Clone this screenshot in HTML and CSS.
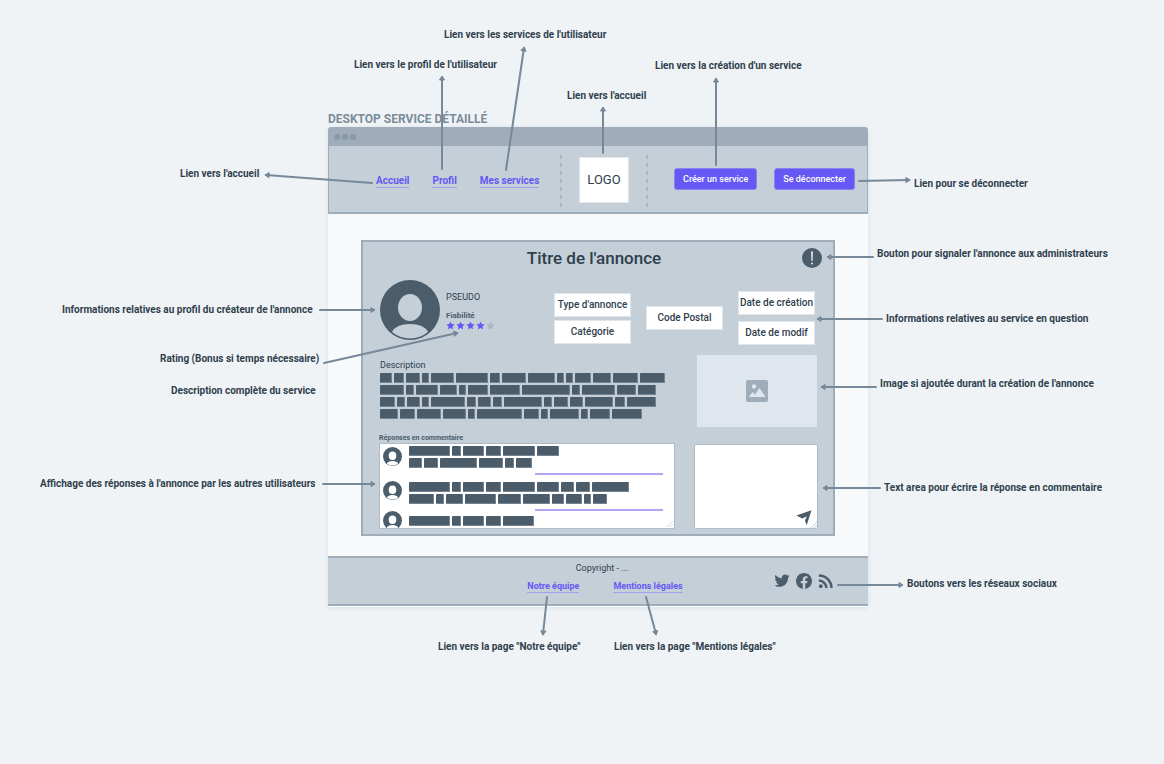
FILE: index.html
```html
<!DOCTYPE html>
<html lang="fr">
<head>
<meta charset="utf-8">
<meta name="viewport" content="width=device-width, initial-scale=1">
<title>Desktop service détaillé</title>
<link rel="stylesheet" href="styles.css">
<script src="words.js" defer></script>
</head>
<body>
<svg class="defs" aria-hidden="true">
  <symbol id="user" viewBox="0 0 60 60">
    <circle cx="30" cy="30" r="30" fill="#4b5d6b"/>
    <ellipse cx="30" cy="27.500" rx="12" ry="13.500" fill="currentColor"/>
    <path d="M12 52Q16 44 30 44Q44 44 48 52A28.500 28.500 0 0 1 12 52Z" fill="currentColor"/>
  </symbol>
  <symbol id="star" viewBox="0 0 24 24">
    <path d="M12 1l3.300 7.200 7.700.9-5.700 5.300 1.500 7.800L12 18.400l-6.800 3.800 1.500-7.800L1 9.100l7.700-.9z" fill="currentColor"/>
  </symbol>
</svg>
<main class="canvas">
  <section class="artboard">
    <h1 class="artboard-name">DESKTOP SERVICE DÉTAILLÉ</h1>
    <div class="window">
      <div class="titlebar"><i></i><i></i><i></i></div>
      <header class="site-header">
        <nav class="links">
          <a href="#">Accueil</a>
          <a href="#">Profil</a>
          <a href="#">Mes services</a>
        </nav>
        <div class="brand"><a class="logo" href="#">LOGO</a></div>
        <div class="actions">
          <button type="button">Créer un service</button>
          <button type="button">Se déconnecter</button>
        </div>
      </header>

      <div class="page">
        <article class="panel">
          <div class="panel-head">
            <h2>Titre de l'annonce</h2>
            <button class="report" type="button" aria-label="Signaler l'annonce">
              <svg viewBox="0 0 20 20"><circle cx="10" cy="10" r="10" fill="#4b5d6b"/><path d="M9 3.500h2l-.4 9.500h-1.200z" fill="#dfe6ed"/><circle cx="10" cy="15.500" r="1" fill="#dfe6ed"/></svg>
            </button>
          </div>

          <div class="meta">
            <svg class="avatar"><use href="#user"/></svg>
            <div class="author">
              <p class="pseudo">PSEUDO</p>
              <p class="caption">Fiabilité</p>
              <div class="stars">
                <svg><use href="#star"/></svg><svg><use href="#star"/></svg><svg><use href="#star"/></svg><svg><use href="#star"/></svg><svg class="off"><use href="#star"/></svg>
              </div>
            </div>
            <div class="chips"><span>Type d'annonce</span><span>Catégorie</span></div>
            <div class="chips"><span>Code Postal</span></div>
            <div class="chips dates"><span>Date de création</span><span>Date de modif</span></div>
          </div>

          <div class="row">
            <section class="description">
              <h3>Description</h3>
              <div class="text">
                <div class="words" data-words="12 10 14 7 23 32 10 24 27 7 7 16 18 25 25"></div>
                <div class="words" data-words="24 8 22 17 7 20 30 48 8 33 19 18"></div>
                <div class="words" data-words="15 8 13 7 34 9 13 9 38 8 14 13 28 10 29"></div>
                <div class="words" data-words="18 15 24 23 7 45 15 7 29 7 20 30"></div>
              </div>
            </section>
            <div class="picture">
              <svg viewBox="0 0 22 22"><rect width="22" height="22" rx="2" fill="#9eadb9"/><circle cx="8" cy="6.500" r="2.200" fill="#dfe6ed"/><path d="M3 17l3.500-5 2.500 2.500 4.500-6.500 6 9z" fill="#dfe6ed"/></svg>
            </div>
          </div>

          <div class="row replies">
            <section class="thread-wrap">
              <h3 class="caption">Réponses en commentaire</h3>
              <div class="thread">
                <div class="comment first">
                  <svg><use href="#user"/></svg>
                  <div class="text">
                    <div class="words" data-words="41 9 21 15 32 22"></div>
                    <div class="words" data-words="13 14 37 24 9 16"></div>
                  </div>
                </div>
                <hr>
                <div class="comment next">
                  <svg><use href="#user"/></svg>
                  <div class="text">
                    <div class="words" data-words="41 9 21 15 32 22 13 14 37"></div>
                    <div class="words" data-words="25 8 17 31 23 27 12 16 7 14"></div>
                  </div>
                </div>
                <hr>
                <div class="comment last">
                  <svg><use href="#user"/></svg>
                  <div class="text">
                    <div class="words" data-words="41 9 21 15 31"></div>
                  </div>
                </div>
                <svg class="grip" viewBox="0 0 6 6"><path d="M0 6L6 0M3 6L6 3" stroke="#d5dce3"/></svg>
              </div>
            </section>
            <div class="reply">
              <textarea aria-label="Réponse en commentaire"></textarea>
              <svg class="grip" viewBox="0 0 6 6"><path d="M0 6L6 0M3 6L6 3" stroke="#c4cfd8"/></svg>
              <button class="send" type="button" aria-label="Envoyer">
                <svg viewBox="0 0 16 16"><path d="M.3 5.500L15.500.3 10.700 15.200 8.900 10.500 10.800 6.200 6.300 8.600z" fill="#4b5d6b"/></svg>
              </button>
            </div>
          </div>
        </article>
      </div>

      <footer class="site-footer">
        <div class="legal">
          <p>Copyright - ...</p>
          <div class="legal-links"><a href="#">Notre équipe</a><a href="#">Mentions légales</a></div>
        </div>
        <div class="social">
          <a href="#" aria-label="Twitter"><svg viewBox="1 2 22 22"><path d="M22.460 6C21.690 6.350 20.860 6.580 20 6.690C20.880 6.160 21.560 5.320 21.880 4.310C21.050 4.810 20.130 5.160 19.160 5.360C18.370 4.500 17.260 4 16 4C13.650 4 11.730 5.920 11.730 8.290C11.730 8.630 11.770 8.960 11.840 9.270C8.280 9.090 5.110 7.380 3 4.790C2.630 5.420 2.420 6.160 2.420 6.940C2.420 8.430 3.170 9.750 4.330 10.500C3.620 10.500 2.960 10.300 2.380 10C2.380 12.110 3.860 13.850 5.820 14.240C5.460 14.340 5.080 14.390 4.690 14.390C4.420 14.390 4.150 14.360 3.890 14.310C4.430 16 6 17.260 7.890 17.290C6.430 18.450 4.580 19.130 2.560 19.130C2.220 19.130 1.880 19.110 1.540 19.070C3.440 20.290 5.700 21 8.120 21C16 21 20.330 14.460 20.330 8.790C20.330 8.600 20.330 8.420 20.320 8.230C21.160 7.630 21.880 6.870 22.460 6Z"/></svg></a>
          <a href="#" aria-label="Facebook"><svg viewBox="2 2 20 20"><path d="M12 2.040C6.500 2.040 2 6.530 2 12.060C2 17.060 5.660 21.210 10.440 21.960V14.960H7.900V12.060H10.440V9.850C10.440 7.340 11.930 5.960 14.220 5.960C15.310 5.960 16.450 6.150 16.450 6.150V8.620H15.190C13.950 8.620 13.560 9.390 13.560 10.180V12.060H16.340L15.890 14.960H13.560V21.960A10 10 0 0 0 22 12.060C22 6.530 17.500 2.040 12 2.040Z"/></svg></a>
          <a href="#" aria-label="RSS"><svg viewBox="3 3 18 18"><path d="M6.180 15.640A2.180 2.180 0 0 1 8.360 17.820C8.360 19 7.380 20 6.180 20C5 20 4 19 4 17.820A2.180 2.180 0 0 1 6.180 15.640M4 4.440A15.560 15.560 0 0 1 19.560 20H16.730A12.730 12.730 0 0 0 4 7.270V4.440M4 10.100A9.900 9.900 0 0 1 13.900 20H11.070A7.070 7.070 0 0 0 4 12.930V10.100Z"/></svg></a>
        </div>
      </footer>
    </div>
  </section>

  <svg class="arrows" width="1164" height="764" aria-hidden="true">
    <defs>
      <marker id="head" markerUnits="userSpaceOnUse" markerWidth="8" markerHeight="8" refX="5" refY="4" orient="auto"><path d="M2 1.500L6 4L2 6.500Z" fill="#778899" stroke="#778899" stroke-width="1" stroke-linejoin="round"/></marker>
    </defs>
    <g stroke="#778899" stroke-width="2" stroke-linecap="round">
      <path d="M506 170L524 48" marker-end="url(#head)"/>
      <path d="M442 169V77" marker-end="url(#head)"/>
      <path d="M603 153V108" marker-end="url(#head)"/>
      <path d="M716 165V79" marker-end="url(#head)"/>
      <path d="M372 183L266 175" marker-end="url(#head)"/>
      <path d="M859 181L909 180" marker-end="url(#head)"/>
      <path d="M873 257H828" marker-end="url(#head)"/>
      <path d="M320 310H374" marker-end="url(#head)"/>
      <path d="M324 363L457 333" marker-end="url(#head)"/>
      <path d="M882 319H818" marker-end="url(#head)"/>
      <path d="M876 387H822" marker-end="url(#head)"/>
      <path d="M323 484H374" marker-end="url(#head)"/>
      <path d="M880 488H824" marker-end="url(#head)"/>
      <path d="M838 585H902" marker-end="url(#head)"/>
      <path d="M547 597L543 634" marker-end="url(#head)"/>
      <path d="M646 597L656 634" marker-end="url(#head)"/>
    </g>
  </svg>

  <p class="note n1">Lien vers les services de l'utilisateur</p>
  <p class="note n2">Lien vers le profil de l'utilisateur</p>
  <p class="note n3">Lien vers la création d'un service</p>
  <p class="note n4">Lien vers l'accueil</p>
  <p class="note n5">Lien vers l'accueil</p>
  <p class="note n6">Lien pour se déconnecter</p>
  <p class="note n7">Bouton pour signaler l'annonce aux administrateurs</p>
  <p class="note n8">Informations relatives au profil du créateur de l'annonce</p>
  <p class="note n9">Informations relatives au service en question</p>
  <p class="note n10">Rating (Bonus si temps nécessaire)</p>
  <p class="note n11">Description complète du service</p>
  <p class="note n12">Image si ajoutée durant la création de l'annonce</p>
  <p class="note n13">Affichage des réponses à l'annonce par les autres utilisateurs</p>
  <p class="note n14">Text area pour écrire la réponse en commentaire</p>
  <p class="note n15">Boutons vers les réseaux sociaux</p>
  <p class="note n16">Lien vers la page "Notre équipe"</p>
  <p class="note n17">Lien vers la page "Mentions légales"</p>
</main>
</body>
</html>
```
FILE: styles.css
```css
* { box-sizing: border-box; }

body {
  margin: 0;
  background: #eff3f6;
  color: #2f404d;
  font-family: Roboto, sans-serif;
  font-size: 9px;
  line-height: 12px;
}

h1, h2, h3, p { margin: 0; font-weight: 400; }
h3 { font-size: 9px; }
svg { display: block; }
button { border: 0; padding: 0; font: inherit; background: none; }

.defs { position: absolute; width: 0; height: 0; }

.canvas { position: relative; min-height: 100vh; overflow: hidden; }

/* Artboard */
.artboard { position: absolute; left: 328px; top: 112px; width: 540px; }
.artboard-name { font-size: 12px; line-height: 15px; font-weight: 700; color: #7b8c9a; white-space: nowrap; }
.window { background: #fff; border-radius: 3px 3px 0 0; box-shadow: 0 1px 4px #d9e0e7; padding-bottom: 1px; }
.titlebar { display: flex; align-items: center; gap: 2px; height: 19px; padding-left: 6px; background: #9eadb9; border-radius: 3px 3px 0 0; }
.titlebar i { width: 6px; height: 6px; border-radius: 50%; background: #8899a7; }

.site-header {
  display: grid;
  grid-template-columns: 231fr 88fr 219fr;
  align-items: center;
  padding: 9px 0 5px;
  background: #c4cfd8;
  border: 1px solid #9eadb9;
  border-width: 0 1px 2px;
}
.links { display: flex; gap: 23px; padding-left: 47px; }
.links a, .legal-links a { color: #6558f5; font-weight: 700; text-decoration: none; border-bottom: 1px solid #a59ff0; white-space: nowrap; }
.links a { font-size: 10px; }
.brand {
  display: flex;
  justify-content: center;
  padding: 2px 0 4px;
  background:
    repeating-linear-gradient(#aab7c3 0 4px, transparent 4px 8px) left / 2px 100% no-repeat,
    repeating-linear-gradient(#aab7c3 0 4px, transparent 4px 8px) right / 2px 100% no-repeat;
}
.logo { display: grid; place-items: center; width: 50px; height: 46px; background: #fff; border: 1px solid #dfe6ed; color: #2f404d; font-size: 13px; text-decoration: none; }
.actions { display: flex; gap: 17px; padding: 0 0 4px 26px; }
.actions button { height: 22px; padding: 0 8px; border: 1px solid #8b82f0; border-radius: 3px; background: #6558f5; color: #fff; font-weight: 500; white-space: nowrap; }

/* Announcement */
.page { padding: 26px 33px 20px; background: #f8f9fb; }
.panel { padding: 0 16px 5px; background: #c4cfd8; border: 2px solid #9eadb9; }
.panel-head { display: grid; grid-template-columns: 12px 1fr 20px; align-items: center; height: 32px; margin: 0 -5px; }
.panel-head h2 { grid-column: 2; text-align: center; font-size: 17px; line-height: 24px; font-weight: 500; }
.report svg { width: 20px; height: 20px; }

.meta { display: flex; align-items: center; height: 78px; gap: 15px; padding: 6px 2px 0 1px; }
.avatar { flex: none; align-self: flex-start; width: 60px; height: 60px; color: #c4cfd8; }
.author { flex: 1; align-self: flex-start; margin: 11px 0 0 -9px; }
.caption { font-size: 8px; line-height: 10px; font-weight: 700; color: #4b5d6b; }
.author .caption { margin-top: 8px; }
.stars { display: flex; gap: 1px; color: #6558f5; }
.stars svg { width: 9px; height: 9px; }
.stars .off { color: #aab7c3; }
.chips { display: grid; gap: 3px; width: 77px; margin-top: 4px; }
.dates { gap: 6px; }
.chips span { display: grid; place-items: center; height: 24px; background: #fff; border: 1px solid #dfe6ed; font-size: 10px; font-weight: 500; white-space: nowrap; }

.row { display: flex; justify-content: space-between; }
.description { padding: 7px 0 0 1px; }
.description h3 { margin-bottom: 2px; }
.text { display: grid; gap: 2px; }
.words { display: flex; gap: 2px; height: 10px; }
.words i { background: #4b5d6b; border: 1px solid #74838f; border-width: 0 1px 1px 0; border-radius: 1px; }
.picture { display: grid; place-items: center; width: 120px; height: 72px; margin-top: 3px; background: #dfe6ed; }
.picture svg { width: 22px; height: 22px; }

.replies { align-items: flex-end; margin: 6px -1px 0 0; }
.thread-wrap { width: 296px; }
.thread-wrap .caption { font-size: 7px; }
.thread { position: relative; height: 86px; overflow: hidden; padding: 2px 3px; background: #fff; border: 1px solid #aebbc7; border-radius: 1px; }
.comment { display: grid; grid-template-columns: 19px 1fr; gap: 7px; align-items: start; }
.comment svg { width: 19px; height: 19px; color: #fff; }
.comment.first svg { margin-top: 1px; }
.comment.next { margin-top: 7px; }
.comment.next svg { margin-top: -1px; }
.comment.last { align-items: center; }
.thread hr { height: 2px; width: 128px; margin: 5px 0 0 152px; border: 0; background: #b0a6f8; }
.reply { position: relative; width: 124px; }
.reply textarea { display: block; width: 100%; height: 85px; border: 1px solid #aebbc7; border-radius: 2px; background: #fff; resize: none; }
.grip { position: absolute; right: 1px; bottom: 1px; width: 6px; height: 6px; fill: none; }
.send { position: absolute; right: 6px; bottom: 3px; }
.send svg { width: 16px; height: 16px; }

/* Footer */
.site-footer { display: grid; grid-template-columns: 1fr 94px; height: 50px; padding: 4px 0 0; background: #c4cfd8; border: 2px solid #9eadb9; border-width: 2px 0; }
.legal { padding-left: 102px; text-align: center; }
.legal-links { display: flex; justify-content: center; gap: 34px; margin: 7px 0 0 6px; line-height: 11px; }
.social { display: flex; align-items: flex-start; gap: 6px; padding-top: 11px; }
.social svg { width: 16px; height: 16px; fill: #4b5d6b; }

/* Annotations pinned on the canvas */
.arrows { position: absolute; left: 0; top: 0; fill: none; }
.note { position: absolute; font-size: 10px; line-height: 14px; font-weight: 700; white-space: nowrap; }
.n1 { left: 444px; top: 28px; }
.n2 { left: 354px; top: 58px; }
.n3 { left: 655px; top: 59px; }
.n4 { left: 567px; top: 89px; }
.n5 { left: 180px; top: 167px; }
.n6 { left: 914px; top: 177px; }
.n7 { left: 877px; top: 247px; }
.n8 { left: 62px; top: 303px; }
.n9 { left: 886px; top: 312px; }
.n10 { left: 160px; top: 352px; }
.n11 { left: 171px; top: 384px; }
.n12 { left: 880px; top: 377px; }
.n13 { left: 40px; top: 477px; }
.n14 { left: 884px; top: 481px; }
.n15 { left: 907px; top: 577px; }
.n16 { left: 438px; top: 640px; }
.n17 { left: 614px; top: 640px; }
```
FILE: words.js
```js
// Placeholder text: each number is the width of one word block.
document.querySelectorAll('.words').forEach(line => {
  line.dataset.words.split(' ').forEach(width => {
    const word = document.createElement('i');
    word.style.width = width + 'px';
    line.append(word);
  });
});
```
